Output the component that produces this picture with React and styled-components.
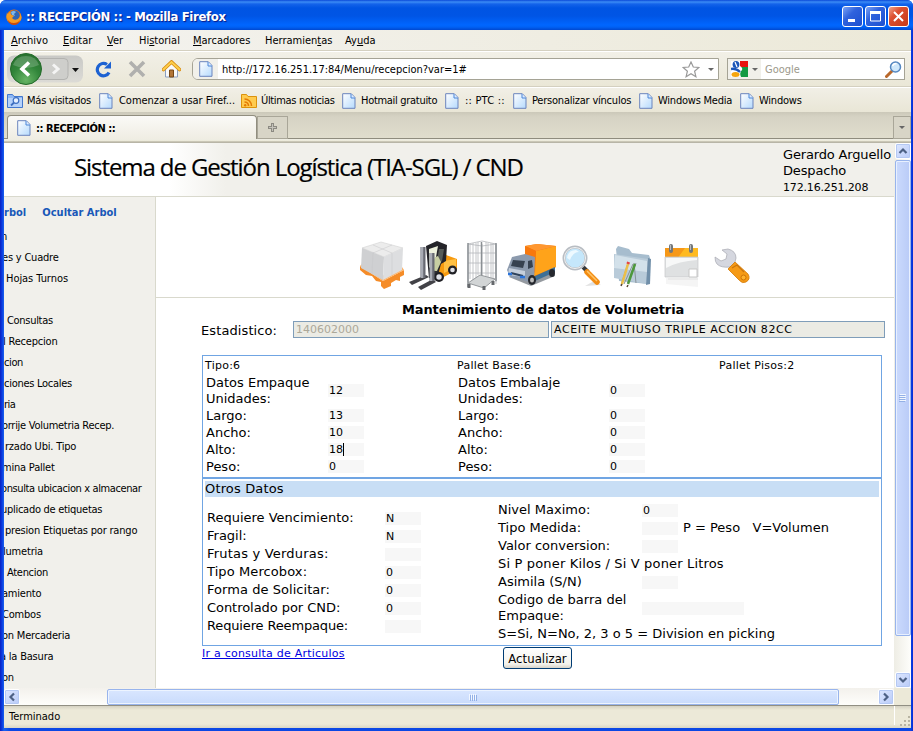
import React from "react";
import styled, { createGlobalStyle } from "styled-components";

const ui = '"DejaVu Sans Condensed", "DejaVu Sans", sans-serif';
const web = '"DejaVu Sans", Verdana, sans-serif';

const GlobalStyle = createGlobalStyle`
  * { box-sizing: border-box; }
  html, body { margin: 0; padding: 0; overflow: hidden; }
  body { font-family: ${ui}; font-stretch: condensed; font-size: 11px; color: #000; }
  svg { display: block; flex: none; }
`;

/* ---------- window frame ---------- */
const Window = styled.div`
  width: 913px;
  height: 731px;
  display: flex;
  flex-direction: column;
  overflow: hidden;
  border-radius: 6px 6px 0 0;
  background: linear-gradient(90deg, #0a1fc0 0, #0a3be0 2px, #1a63ee 4px, #0b47e4 10px, #0b47e4 911px, #0831d9 912px);
`;
const TitleBar = styled.div`
  height: 30px;
  flex: none;
  display: flex;
  align-items: center;
  padding: 3px 4px 0 6px;
  background: linear-gradient(#0a49d8 0, #3b8cf5 2px, #1463ea 4px, #0054e3 8px, #0055e5 16px, #0066ff 25px, #0061f5 27px, #0048d0 30px);
`;
const Title = styled.h1`
  flex: 1;
  margin: 0 0 0 4px;
  font: bold 13px ${ui};
  font-stretch: condensed;
  letter-spacing: -0.36px;
  color: #fff;
  text-shadow: 1px 1px 1px #0a1883;
  white-space: nowrap;
`;
const WinButton = styled.button`
  width: 21px;
  height: 21px;
  margin-left: 2px;
  padding: 0;
  display: grid;
  place-items: center;
  border: 1px solid #fff;
  border-radius: 3px;
  background: ${(p) =>
    p.$close
      ? "linear-gradient(135deg, #f0a58c, #dd5030 35%, #c63a18)"
      : "linear-gradient(135deg, #7ba3f5, #2f62dd 40%, #1c4fd0)"};
`;
const Frame = styled.div`
  flex: 1;
  min-height: 0;
  margin: 0 2px 4px 4px;
  display: flex;
  flex-direction: column;
  background: #ece9d8;
`;
const Spacer = styled.span`
  width: ${(p) => p.$w}px;
  flex: none;
`;

/* ---------- menus and toolbars ---------- */
const MenuBar = styled.div`
  height: 21px;
  flex: none;
  display: flex;
  align-items: center;
  padding-left: 7px;
  background: linear-gradient(90deg, #f4f3f0, #efede2 60%, #ece9d8);
  border-bottom: 1px solid #d4d0c0;
`;
const MenuItem = styled.span`
  width: ${(p) => p.$w}px;
  white-space: nowrap;
`;
const NavBar = styled.div`
  height: 36px;
  flex: none;
  display: flex;
  align-items: center;
  padding: 0 6px 0 3px;
  border-top: 1px solid #fff;
  border-bottom: 1px solid #d4d0c0;
  background: linear-gradient(#f2f0e7, #eae7d7);
`;
const IconSlot = styled.span`
  width: 34px;
  display: grid;
  place-items: center;
`;
const Field = styled.div`
  height: 22px;
  width: ${(p) => p.$w}px;
  flex: none;
  display: flex;
  align-items: center;
  border: 1px solid #a5a395;
  border-radius: ${(p) => (p.$round ? "6px 0 0 6px" : "0")};
  background: #fff;
  overflow: hidden;
`;
const FieldIcon = styled.span`
  width: ${(p) => p.$w}px;
  height: 100%;
  flex: none;
  display: flex;
  align-items: center;
  justify-content: center;
  gap: 4px;
  background: #f1f0ea;
`;
const FieldText = styled.span`
  flex: 1;
  padding-left: 4px;
  white-space: nowrap;
  color: ${(p) => (p.$dim ? "#9c998b" : "#000")};
`;
const BookmarkBar = styled.div`
  height: 25px;
  flex: none;
  display: flex;
  align-items: center;
  padding: 1px 0 0 3px;
  border-top: 1px solid #fff;
  background: linear-gradient(#f1efe6, #e9e6d6);
`;
const Bookmark = styled.span`
  width: ${(p) => p.$w}px;
  flex: none;
  display: flex;
  align-items: center;
  gap: ${(p) => p.$gap}px;
  white-space: nowrap;
  letter-spacing: ${(p) => p.$ls ?? -0.22}px;
`;
const TabStrip = styled.div`
  height: 31px;
  flex: none;
  display: flex;
  align-items: flex-start;
  padding: 3px 0 0 3px;
  background: linear-gradient(#cbc8b9 0, #d6d3c4 5px, #e0ddcd 26px, #8f8c7e 26px, #8f8c7e 27px, #efeee6 27px, #ece9d8 29px, #a8a595 30px, #c8c5b8 31px);
`;
const Tab = styled.div`
  width: 250px;
  height: 24px;
  display: flex;
  align-items: center;
  gap: 5px;
  padding: 1px 0 0 9px;
  border: 1px solid #918e7f;
  border-bottom: 0;
  border-radius: 4px 4px 0 0;
  background: linear-gradient(#fbfaf7, #efede3);
  font-weight: bold;
  letter-spacing: -0.45px;
`;
const NewTab = styled.div`
  width: 31px;
  height: 23px;
  margin-top: 1px;
  display: grid;
  place-items: center;
  border: 1px solid #a9a698;
  background: #d8d5c7;
`;
const AllTabs = styled(NewTab)`
  width: 18px;
  margin-left: auto;
`;

/* ---------- viewport ---------- */
const Viewport = styled.div`
  height: 545px;
  flex: none;
  display: flex;
`;
const Page = styled.div`
  width: 890px;
  display: grid;
  grid-template: 54px 491px / 152px 738px;
  background: #fff;
  overflow: hidden;
`;
const PageHeader = styled.header`
  grid-column: 1 / 3;
  display: flex;
  justify-content: space-between;
  border-bottom: 1px solid #d9d9cd;
  background: linear-gradient(90deg, #fff 165px, #f1f0eb 222px);
`;
const SystemName = styled.h2`
  margin: 7px 0 0 70px;
  font: 24px/34px "Open Sans", "Noto Sans", sans-serif;
  font-stretch: normal;
  letter-spacing: -1.08px;
  -webkit-text-stroke: 0.2px #000;
  white-space: nowrap;
`;
const UserInfo = styled.div`
  width: 111px;
  padding-top: 4px;
  font: 13px/16px ${web};
  letter-spacing: -0.16px;
  white-space: nowrap;
`;
const Address = styled.small`
  display: block;
  font-size: 11px;
  line-height: 17px;
`;
const Sidebar = styled.nav`
  border-right: 1px solid #d9d9cd;
  background: #f1f0eb;
  overflow: hidden;
`;
const TreeActions = styled.div`
  height: 28px;
  margin-top: 1px;
  display: flex;
  gap: 16px;
  font: bold 11px/29px ${ui};
  font-stretch: condensed;
  color: #1858b8;
  letter-spacing: 0.02px;
  white-space: nowrap;
`;
const TreeItem = styled.div`
  height: 21px;
  line-height: 21px;
  margin-left: ${(p) => p.$x}px;
  letter-spacing: ${(p) => p.$ls || -0.2}px;
  white-space: pre;
`;
const Main = styled.main`
  font-family: ${web};
  font-stretch: normal;
`;
const IconRow = styled.div`
  height: 101px;
  padding: 43px 0 0 201px;
  display: flex;
  border-bottom: 1px solid #d9d9cd;
`;
const Tool = styled.span`
  width: 50px;
  height: 50px;
`;
const Content = styled.div`
  padding: 3px 0 0 45px;
`;
const Heading = styled.h3`
  margin: 0 0 2px 201px;
  font: bold 13px/18px ${web};
  letter-spacing: -0.12px;
  white-space: nowrap;
`;
const StatRow = styled.div`
  display: flex;
  align-items: center;
  height: 17px;
  font-size: 13px;
`;
const StatLabel = styled.label`
  width: 92px;
  padding-top: 2px;
  letter-spacing: 0.1px;
`;
const StatInput = styled.div`
  width: ${(p) => p.$w}px;
  height: 17px;
  margin-right: 2px;
  padding-left: 2px;
  border: 1px solid #7f9db9;
  background: #ebebe4;
  font-size: 11px;
  line-height: 16px;
  letter-spacing: ${(p) => (p.$dim ? 0 : 0.6)}px;
  color: ${(p) => (p.$dim ? "#aca899" : "#000")};
  white-space: nowrap;
`;
const Panel = styled.section`
  width: 680px;
  margin: 0 0 0 1px;
  border: 1px solid #70a5e3;
  font-size: 13px;
`;
const MeasurePanel = styled(Panel)`
  height: 123px;
  margin-top: 17px;
  padding: 1px 2px 0;
`;
const OtherPanel = styled(Panel)`
  height: 168px;
  padding: 2px;
`;
const Summary = styled.div`
  display: grid;
  grid-template-columns: 252px 262px auto;
  height: 17px;
  line-height: 17px;
  font-size: 11px;
  letter-spacing: 0.25px;
`;
const Columns = styled.div`
  display: grid;
  grid-template-columns: ${(p) => p.$cols};
  padding-left: ${(p) => p.$pad}px;
`;
const Row = styled.div`
  display: grid;
  grid-template-columns: ${(p) => p.$label}px auto 1fr;
  align-items: center;
  height: ${(p) => p.$h}px;
  line-height: 16px;
  letter-spacing: ${(p) => p.$ls || 0}px;
  white-space: nowrap;
`;
const Box = styled.div`
  width: ${(p) => p.$w || 36}px;
  height: 13px;
  padding-left: 1px;
  background: #f7f7f7;
  font-size: 11px;
  line-height: 14px;
  letter-spacing: 0;
`;
const Caret = styled.span`
  display: inline-block;
  width: 1px;
  height: 13px;
  vertical-align: top;
  background: #000;
`;
const Note = styled.span`
  padding-left: 5px;
  white-space: pre;
`;
const SectionTitle = styled.div`
  height: 16px;
  line-height: 16px;
  letter-spacing: 0.15px;
  background: #c8def5;
`;
const RightCol = styled.div`
  padding-top: 4px;
`;
const LeftCol = styled.div`
  padding-top: 12px;
`;
const Footer = styled.div`
  display: flex;
  padding: 1px 0 0 1px;
`;
const Link = styled.a`
  width: 301px;
  font-size: 11px;
  line-height: 13px;
  letter-spacing: 0.23px;
  color: #0000e0;
  text-decoration: underline;
`;
const SubmitButton = styled.button`
  width: 69px;
  height: 22px;
  padding: 0;
  border: 1px solid #003c74;
  border-radius: 3px;
  background: linear-gradient(#fff, #f3f2ec 80%, #d8d3c8);
  font: 13px ${ui};
  font-stretch: condensed;
  letter-spacing: 0.05px;
`;

/* ---------- scroll bars ---------- */
const VScroll = styled.div`
  width: 17px;
  display: flex;
  flex-direction: column;
  padding-left: 1px;
  background: linear-gradient(90deg, #eeede5, #fefefb);
`;
const HScroll = styled.div`
  height: 17px;
  flex: none;
  display: flex;
`;
const HTrack = styled.div`
  width: 890px;
  display: flex;
  padding-top: 1px;
  background: linear-gradient(#f3f1ec, #fefefb);
`;
const ScrollButton = styled.div`
  width: 16px;
  height: 16px;
  flex: none;
  display: grid;
  place-items: center;
  border: 1px solid #fff;
  border-radius: 2px;
  background: linear-gradient(135deg, #dde7ff, #b9cbf8);
  box-shadow: inset 0 0 0 1px #b4c8f3;
`;
const VThumb = styled.div`
  height: 476px;
  margin: 1px 0 36px;
  display: grid;
  place-items: center;
  border: 1px solid #98b4ec;
  border-radius: 2px;
  background: linear-gradient(90deg, #cbdafd, #b9cbf7);
  box-shadow: inset 0 0 0 1px #e8f0ff;
`;
const HThumb = styled.div`
  width: 732px;
  height: 16px;
  margin: 0 39px 0 87px;
  display: grid;
  place-items: center;
  border: 1px solid #98b4ec;
  border-radius: 2px;
  background: linear-gradient(#d9e6ff, #c9dbfc);
  box-shadow: inset 0 0 0 1px #edf4ff;
`;
const StatusBar = styled.div`
  flex: 1;
  display: flex;
  align-items: center;
  justify-content: space-between;
  padding: 0 0 2px 5px;
  border-top: 1px solid #918f83;
  background: linear-gradient(#d5d2c3, #ece9d8 4px, #ece9d8 18px, #d8d5c5);
`;

/* ---------- small icons ---------- */
const DocIcon = () => (
  <svg width="14" height="16" viewBox="0 0 14 16">
    <defs><linearGradient id="doc" x1="0" y1="0" x2="1" y2="1"><stop offset="0" stopColor="#fff" /><stop offset="1" stopColor="#b5dafd" /></linearGradient></defs>
    <path d="M.7.7h8.6l3.7 3.8v10.800H.7z" fill="url(#doc)" stroke="#6b84bd" />
    <path d="M9 1v4h4" fill="#dcebff" stroke="#4c87d8" />
  </svg>
);
const Arrow = ({ color = "#666" }) => (
  <svg width="6" height="3"><path d="M0 0h6L3 3z" fill={color} /></svg>
);
const FirefoxIcon = () => (
  <svg width="16" height="16" viewBox="0 0 16 16">
    <circle cx="8" cy="8" r="7.500" fill="#e87511" />
    <circle cx="8.500" cy="6.500" r="5.200" fill="#2f65b5" />
    <path d="M5 3q3-2 5 0l-2 2 1 2-3-1z" fill="#7fb9ec" />
    <path d="M1 3q0 2 1 2 1-2 3-2-1 2 1 3l2 1-2 2q2 3 6 1 3-2 2-6 3 5 0 8-3 4-8 3Q0 13 .4 7z" fill="#f69b22" />
    <path d="M1 8q1 6 7 6 4 0 6-3-1 5-6 5-6 0-7-8" fill="#c94a0e" />
  </svg>
);
const BackForward = () => (
  <svg width="77" height="32" viewBox="0 0 77 32">
    <defs>
      <radialGradient id="back" cx=".5" cy=".85" r=".85"><stop offset="0" stopColor="#68b565" /><stop offset=".55" stopColor="#31853a" /><stop offset="1" stopColor="#28702e" /></radialGradient>
      <linearGradient id="pill" x2="0" y2="1"><stop offset="0" stopColor="#c9c9c6" /><stop offset="1" stopColor="#dcdbd6" /></linearGradient>
    </defs>
    <rect x="0" y="2.500" width="76" height="27" rx="7" fill="url(#pill)" />
    <path d="M30 5.500h27q4 0 4 4v13q0 4-4 4H30z" fill="#cececb" stroke="#b3b3b0" />
    <path d="m46 11.500 5 4.500-5 4.500" fill="none" stroke="#f4f4f4" strokeWidth="3" />
    <circle cx="19" cy="16" r="15.500" fill="url(#back)" stroke="#246b2a" />
    <path d="M6 12q3-9 13-9t13 9q-13 6-26 0" fill="#fff" opacity=".2" />
    <path d="m22 9.500-7 6.500 7 6.500" fill="none" stroke="#fff" strokeWidth="3.600" />
    <path d="M65 15h7l-3.500 4z" fill="#111" />
  </svg>
);
const ReloadIcon = () => (
  <svg width="17" height="17" viewBox="0 0 17 17">
    <path d="M14 11.500A6.200 6.200 0 1 1 12 3.500" fill="none" stroke="#1d62d2" strokeWidth="3.200" />
    <path d="M16 .5v7H9z" fill="#1d62d2" />
  </svg>
);
const StopIcon = () => (
  <svg width="18" height="18"><path d="m2 2 14 14M16 2 2 16" stroke="#b0b0ae" strokeWidth="3.600" /></svg>
);
const HomeIcon = () => (
  <svg width="19" height="18" viewBox="0 0 19 18">
    <path d="M3.500 9v8h12V9l-6-6z" fill="#fafafa" stroke="#8b9fc0" />
    <path d="M1.500 9.500 9.500 2l8 7.500" fill="none" stroke="#d78b12" strokeWidth="3.600" strokeLinecap="round" />
    <path d="M1.500 9.500 9.500 2l8 7.500" fill="none" stroke="#fdce4b" strokeWidth="2" strokeLinecap="round" />
    <path d="M7.500 10h4v7h-4z" fill="#b27638" stroke="#754716" />
  </svg>
);
const StarIcon = () => (
  <svg width="18" height="17" viewBox="0 0 18 17">
    <path d="m9 1 2.300 5 5.500.500-4.200 3.700 1.300 5.500L9 12.800l-4.900 2.900 1.300-5.500L1.200 6.500l5.500-.5z" fill="#fff" stroke="#999" strokeWidth="1.200" />
  </svg>
);
const GoogleIcon = () => (
  <svg width="17" height="16" viewBox="0 0 17 16">
    <path d="M9 0h8v6H9z" fill="#e8120c" /><path d="M7 6h10v10H7z" fill="#139a43" />
    <path d="M0 0h9v5q3 2 2 4-3 3-1 7H0z" fill="#fff" />
    <ellipse cx="5" cy="3.500" rx="3.400" ry="3.500" fill="#1b56b8" />
    <path d="M4 1 6 6" stroke="#fff" strokeWidth="1.200" />
    <path d="M0 8q5-1 9 3" fill="none" stroke="#1b56b8" strokeWidth="2.400" />
    <ellipse cx="4.500" cy="13.400" rx="4" ry="2.500" fill="#f5a50c" />
  </svg>
);
const SearchIcon = () => (
  <svg width="17" height="17" viewBox="0 0 17 17">
    <path d="m7 10-5.500 5.500" stroke="#b9682b" strokeWidth="3" strokeLinecap="round" />
    <circle cx="10.500" cy="6" r="5" fill="#cfe8fb" stroke="#5587c0" strokeWidth="1.500" />
    <path d="M7.500 5q1-2.500 4-2.500" fill="none" stroke="#fff" strokeWidth="1.500" />
  </svg>
);
const FolderSearch = () => (
  <svg width="16" height="14" viewBox="0 0 16 14">
    <path d="M.5.500h5l1.500 2h8.500v11H.5z" fill="#8fb8f4" stroke="#4277cd" />
    <path d="M1 4h14v9H1z" fill="#b5d2fa" />
    <circle cx="9" cy="6.500" r="2.800" fill="#e6f1ff" stroke="#3d6fc0" strokeWidth="1.200" />
    <path d="m7 8.500-3 3" stroke="#3d6fc0" strokeWidth="1.800" />
  </svg>
);
const RssIcon = () => (
  <svg width="16" height="14" viewBox="0 0 16 14">
    <path d="M.5.500h5l1.500 2h8.500v11H.5z" fill="#ffcb4e" stroke="#dc930c" />
    <path d="M3.500 5a7 7 0 0 1 7 7M3.500 8a4 4 0 0 1 4 4" fill="none" stroke="#e47b05" strokeWidth="1.600" />
    <circle cx="4.200" cy="11.300" r="1.200" fill="#e47b05" />
  </svg>
);
const Chevron = ({ turn = 0 }) => (
  <svg width="10" height="10" viewBox="0 0 10 10">
    <path d="M1.500 7 5 3.500 8.500 7" fill="none" stroke="#4d6185" strokeWidth="2.200" transform={`rotate(${turn} 5 5)`} />
  </svg>
);
const Grip = ({ turn }) => (
  <svg width="8" height="8" viewBox="0 0 8 8">
    <g transform={turn ? "rotate(90 4 4)" : undefined}>
      <path d="M.5 1v6M2.500 1v6M4.500 1v6M6.500 1v6" stroke="#f2f7ff" />
      <path d="M1.500 2v6M3.500 2v6M5.500 2v6M7.500 2v6" stroke="#93b0e6" />
    </g>
  </svg>
);
const ResizeGrip = () => (
  <svg width="17" height="20" viewBox="0 0 17 20">
    <path d="M.5 0v19" stroke="#fff" />
    <path d="M14 10h2v2h-2zM10 14h2v2h-2zM14 14h2v2h-2zM6 18h2v2H6zM10 18h2v2h-2zM14 18h2v2h-2z" fill="#b8b4a2" />
  </svg>
);

/* ---------- application icons ---------- */
const Art = ({ children, x = 0, y = 0 }) => (
  <svg width="50" height="52" viewBox={`${-x} ${-y} 50 52`}>{children}</svg>
);
const PalletArt = () => (
  <Art y={-3}>
    <path d="m3 29 23 15 21-11v5l-4 2v4l-4-1-5 3v3l-7 3-3-3v-4l-5-1-4-5-6-1-6-5z" fill="#f58c28" />
    <path d="m3 29 23 15 21-11-2-3-20 9L5 27z" fill="#ffb265" />
    <path d="m5 11 19-6 22 6-19 9z" fill="#ececec" stroke="#d2d2d2" strokeWidth=".6" />
    <path d="m5 11 22 9-1 23L4 31z" fill="#cfd0d2" />
    <path d="m27 20 19-9-1 22-19 10z" fill="#dddee0" />
    <path d="m16 15-1 22M16 8l19 8v22M35 8l-19 8" stroke="#c6c7c9" strokeWidth=".5" fill="none" />
  </Art>
);
const ForkliftArt = () => (
  <Art y={-1}>
    <path d="M30 20l9-4 11 4v11l-17 9-8-3z" fill="#f79a0f" />
    <path d="m37 22 12-2v8l-12 6z" fill="#ffc043" />
    <path d="M19 7 30 2l10 4-1 16-5 3-4 15-8-1z" fill="#242429" />
    <path d="m22 10 9-3-2 11-4 8-3 3z" fill="#edf1dd" />
    <path d="M32 10h5l-2 12-6 6z" fill="#565b58" />
    <path d="M26 23q1-5 5-6l3 6-4 9h-5z" fill="#c7cea2" />
    <path d="M24 31l9 2 1 7-11 1z" fill="#303035" />
    <circle cx="32" cy="38" r="5" fill="#202025" /><circle cx="32" cy="38" r="2.700" fill="#dfe1e8" />
    <circle cx="45.500" cy="31" r="4.500" fill="#202025" /><circle cx="45.500" cy="31" r="2.300" fill="#dfe1e8" />
    <path d="m2 43 17-7 3 2-17 8zM11 48l15-8 3 3-15 8z" fill="#424247" />
    <path d="M16 8v31M25 14v28" stroke="#676972" strokeWidth="5" /><path d="M15 8v31M24 14v28" stroke="#a8abb4" strokeWidth="2.500" />
  </Art>
);
const CageArt = () => (
  <Art>
    <path d="M11 5v37M16 3v37M21 2v33M25 4v38M29 2v34M34 3v38M39 4v38M11 4l14-3 14 3v40M11 4l14 2 14-2M11 13h28M11 23h28M11 33h28M13 4v35M36 3v36M31 3v35M19 3v36" fill="none" stroke="#b5b8bb" strokeWidth=".8" />
    <path d="M11 3v44M24.500 2v35M39 3v38" stroke="#8b9094" strokeWidth="1.500" />
    <path d="m11 43 12-8 15 4-11 9z" fill="#d2d5d6" stroke="#94989b" />
    <path d="M12 44v4M27 46v4M36 41v4" stroke="#65686c" strokeWidth="3" />
  </Art>
);
const TruckArt = () => (
  <Art x={-1} y={1}>
    <path d="m3 36 22 9 24-10-2-5-33-4z" fill="#4e5660" opacity=".6" />
    <path d="M19 5 31 3l19 2v21l-22 10z" fill="#f07c0c" />
    <path d="m30 10 20-5v21l-22 9z" fill="#ffa31a" />
    <path d="m19 5 12-2 19 2-20 5z" fill="#ff9730" /><path d="m19 5 11 5-1 22-10-14z" fill="#f7780d" />
    <path d="m6 16 13-3 10 3-1 26-24-6-3-7z" fill="#8c9aad" />
    <path d="m7 19 12 1-2 7-12-2z" fill="#36414f" /><path d="m22 20 4-1 1 7-5 2z" fill="#36414f" />
    <path d="m3 27 16 3v6L2 34z" fill="#c5cfdc" /><path d="m5 32 12 3" stroke="#30435c" strokeWidth="2" /><path d="M2 33h4m8 3h5" stroke="#2b74db" strokeWidth="2.500" />
    <path d="m29 35 20-9v5l-20 9z" fill="#3e6f96" />
    <ellipse cx="26" cy="39" rx="4" ry="5" fill="#25282e" /><ellipse cx="26" cy="39" rx="2" ry="2.500" fill="#bbb" />
    <ellipse cx="46" cy="32" rx="3" ry="4" fill="#25282e" />
  </Art>
);
const LensArt = () => (
  <Art x={1}>
    <path d="m27 46 16-1-7-4z" fill="#e2e2e2" />
    <path d="m25 27 5 5" stroke="#37393c" strokeWidth="4" /><path d="m29 32 10 10" stroke="#f28d13" strokeWidth="5.500" strokeLinecap="round" /><path d="m29 31 10 10" stroke="#ffc56a" strokeWidth="1.500" />
    <circle cx="17" cy="18" r="11" fill="#c5e7fb" stroke="#b8bdc3" strokeWidth="3" /><circle cx="17" cy="18" r="10.500" fill="none" stroke="#f1f1f1" />
    <path d="M9 18q1-8 9-8l3 2q-6 0-9 8z" fill="#edf9ff" />
  </Art>
);
const FolderArt = () => (
  <Art x={2} y={1}>
    <path d="m7 8 2-3 11 3 3 4 17 2 1 3-2 26-29-3z" fill="#a7bdce" />
    <path d="m5 13 34 5-1 25-33-6z" fill="#b9cbd9" /><path d="m6 14 32 6v11L5 27z" fill="#dce8ef" opacity=".75" />
    <path d="m39 17 3 1-1 25-4 1z" fill="#718fa9" />
    <path d="m19 22-7 22M24 23l-9 20M27 22l-8 20M25 22l2 20" stroke="#879398" strokeWidth="1" />
    <path d="m19 23-6 20" stroke="#ecbf49" strokeWidth="2.500" /><path d="m26 23-7 20" stroke="#4d983c" strokeWidth="2.500" />
    <path d="m19.500 21-.6 2" stroke="#e84440" strokeWidth="3" /><path d="m13 43-1 2m7-1-1 2" stroke="#594534" strokeWidth="1.500" />
  </Art>
);
const CalendarArt = () => (
  <Art x={2} y={2}>
    <path d="M7 36h32v9L7 42z" fill="#eeefef" opacity=".6" />
    <path d="M6 6h33v11H6z" fill="#f69818" /><path d="M26 6h13v11H18z" fill="#ffba20" />
    <path d="M6 15h33v20H6z" fill="#dfe1e2" stroke="#c5c7c8" strokeWidth=".7" /><path d="M7 26q13-7 31-8v-2H7z" fill="#f7f8f8" />
    <path d="M30 35v-8h8v8z" fill="#fff" stroke="#c7c7c7" />
    <path d="M12 4v5M32 4v5" stroke="#73777a" strokeWidth="4" strokeLinecap="round" /><path d="M11.500 3v5m20-5v5" stroke="#bbb" />
    <path d="M9 37h30" stroke="#e1e1e1" />
  </Art>
);
const WrenchArt = () => (
  <Art x={3}>
    <path d="m12 10 6-1q8 2 8 9l-1 4-5 5q-9 1-13-3-2-2-2-7l6 4 5-2 1-5z" fill="#d5d7df" stroke="#aeb0b8" strokeWidth=".8" />
    <path d="m25 22 13 12q3 5-2 8-4 2-7-2L18 29z" fill="#f59a16" stroke="#d37a08" strokeWidth=".8" />
    <path d="m22 28 5-3 7 7" fill="none" stroke="#c9750f" strokeWidth="1.200" /><circle cx="33.500" cy="37.500" r="2.500" fill="#ffb12c" stroke="#cd7508" />
  </Art>
);

/* ---------- data ---------- */
const menus = [
  ["", "A", "rchivo", 52], ["", "E", "ditar", 44], ["", "V", "er", 32], ["Hi", "s", "torial", 54],
  ["", "M", "arcadores", 72], ["Herramien", "t", "as", 80], ["Ay", "u", "da", 50],
];
const bookmarks = [
  ["Más visitados", FolderSearch, 92, 4], ["Comenzar a usar Firef...", DocIcon, 142, 6, -0.04],
  ["Últimas noticias", RssIcon, 101, 4, -0.34], ["Hotmail gratuito", DocIcon, 103, 5, -0.3],
  [":: PTC ::", DocIcon, 68, 6, 0.2], ["Personalizar vínculos", DocIcon, 126, 5],
  ["Windows Media", DocIcon, 101, 5], ["Windows", DocIcon, 80, 5],
];
const tree = [
  ["n", -3], ["es y Cuadre", -2], ["Hojas Turnos", 2, -0.05], ["", 0], ["Consultas", 3, -0.3], ["l Recepcion", -1],
  ["cion", 0, -0.4], ["ciones Locales", 0, -0.28], ["ria", 0, -0.5], ["orrije Volumetria Recep.", -2, -0.28], ["rzado Ubi. Tipo", 1],
  ["mina Pallet", -2], ["onsulta ubicacion x almacenar", -3, -0.38], ["uplicado de etiquetas", -3, -0.28],
  ["presion Etiquetas por rango", 1], ["lumetria", -1], ["Atencion", 3, -0.3], ["amiento", -2], ["Combos", -2],
  ["on Mercaderia", -2], ["a la Basura", -4], ["on", -2],
];
const packing = [["Largo:", "13"], ["Ancho:", "10"], ["Alto:", "18", true], ["Peso:", "0"]];
const wrapping = [["Largo:", "0"], ["Ancho:", "0"], ["Alto:", "0"], ["Peso:", "0"]];
const flags = [
  ["Requiere Vencimiento:", "N"], ["Fragil:", "N"], ["Frutas y Verduras:", "", 0.2], ["Tipo Mercobox:", "0", 0.1],
  ["Forma de Solicitar:", "0", 0.05], ["Controlado por CND:", "0", -0.05], ["Requiere Reempaque:", "", -0.15],
];
const art = [PalletArt, ForkliftArt, CageArt, TruckArt, LensArt, FolderArt, CalendarArt, WrenchArt];

const Measures = ({ title, first, rows, label }) => (
  <div>
    <Row $label={label} $h={33}>
      <span>{title}<br />Unidades:</span>
      <Box>{first}</Box>
    </Row>
    {rows.map(([name, value, caret]) => (
      <Row key={name} $label={label} $h={17}>
        <span>{name}</span>
        <Box>{value}{caret && <Caret />}</Box>
      </Row>
    ))}
  </div>
);

export default function App() {
  return (
    <Window>
      <GlobalStyle />
      <TitleBar>
        <FirefoxIcon />
        <Title>:: RECEPCIÓN :: - Mozilla Firefox</Title>
        <WinButton><svg width="15" height="15"><path d="M3 10h7v3H3z" fill="#fff" /></svg></WinButton>
        <WinButton><svg width="15" height="15"><path d="M2.500 3.500h10v8.500h-10z" fill="none" stroke="#fff" /><path d="M2 2h11v3H2z" fill="#fff" /></svg></WinButton>
        <WinButton $close><svg width="15" height="15"><path d="m3 3 9 9m0-9-9 9" stroke="#fff" strokeWidth="2" /></svg></WinButton>
      </TitleBar>
      <Frame>
        <MenuBar>
          {menus.map(([a, u, b, w]) => <MenuItem key={u + b} $w={w}>{a}<u>{u}</u>{b}</MenuItem>)}
        </MenuBar>
        <NavBar>
          <BackForward />
          <Spacer $w={2} />
          <IconSlot><ReloadIcon /></IconSlot>
          <IconSlot><StopIcon /></IconSlot>
          <IconSlot><HomeIcon /></IconSlot>
          <Spacer $w={4} />
          <Field $w={527} $round>
            <FieldIcon $w={25}><DocIcon /></FieldIcon>
            <FieldText>http://172.16.251.17:84/Menu/recepcion?var=1#</FieldText>
            <StarIcon />
            <Spacer $w={8} />
            <Arrow />
            <Spacer $w={4} />
          </Field>
          <Spacer $w={8} />
          <Field $w={178}>
            <FieldIcon $w={33}><GoogleIcon /><Arrow /></FieldIcon>
            <FieldText $dim>Google</FieldText>
            <SearchIcon />
            <Spacer $w={2} />
          </Field>
        </NavBar>
        <BookmarkBar>
          {bookmarks.map(([name, Icon, w, gap, ls]) => (
            <Bookmark key={name} $w={w} $gap={gap} $ls={ls}><Icon />{name}</Bookmark>
          ))}
        </BookmarkBar>
        <TabStrip>
          <Tab><DocIcon />:: RECEPCIÓN ::</Tab>
          <NewTab><svg width="9" height="9"><path d="M3 0h3v3h3v3H6v3H3V6H0V3h3z" fill="#8c8a82" /><path d="M4 1h1v3h3v1H5v3H4V5H1V4h3z" fill="#c5c3bb" /></svg></NewTab>
          <AllTabs><Arrow /></AllTabs>
        </TabStrip>
        <Viewport>
          <Page>
            <PageHeader>
              <SystemName>Sistema de Gestión Logística (TIA-SGL) / CND</SystemName>
              <UserInfo>Gerardo Arguello<br />Despacho<Address>172.16.251.208</Address></UserInfo>
            </PageHeader>
            <Sidebar>
              <TreeActions><span>rbol</span><span>Ocultar Arbol</span></TreeActions>
              {tree.map(([name, x, ls], i) => <TreeItem key={i} $x={x} $ls={ls}>{name}</TreeItem>)}
            </Sidebar>
            <Main>
              <IconRow>{art.map((Icon, i) => <Tool key={i}><Icon /></Tool>)}</IconRow>
              <Content>
                <Heading>Mantenimiento de datos de Volumetria</Heading>
                <StatRow>
                  <StatLabel>Estadistico:</StatLabel>
                  <StatInput $w={256} $dim>140602000</StatInput>
                  <StatInput $w={334}>ACEITE MULTIUSO TRIPLE ACCION 82CC</StatInput>
                </StatRow>
                <MeasurePanel>
                  <Summary><span>Tipo:6</span><span>Pallet Base:6</span><span>Pallet Pisos:2</span></Summary>
                  <Columns $cols="252px auto" $pad={1}>
                    <Measures title="Datos Empaque" first="12" rows={packing} label={122} />
                    <Measures title="Datos Embalaje" first="0" rows={wrapping} label={151} />
                  </Columns>
                </MeasurePanel>
                <OtherPanel>
                  <SectionTitle>Otros Datos</SectionTitle>
                  <Columns $cols="291px auto" $pad={2}>
                    <LeftCol>
                      {flags.map(([name, value, ls]) => (
                        <Row key={name} $label={178} $h={18} $ls={ls}><span>{name}</span><Box>{value}</Box></Row>
                      ))}
                    </LeftCol>
                    <RightCol>
                      <Row $label={144} $h={18}><span>Nivel Maximo:</span><Box>0</Box></Row>
                      <Row $label={144} $h={18}><span>Tipo Medida:</span><Box /><Note>{"P = Peso\u00a0\u00a0 V=Volumen"}</Note></Row>
                      <Row $label={144} $h={18}><span>Valor conversion:</span><Box /></Row>
                      <Row $label={144} $h={18} $ls={0.17}><span>Si P poner Kilos / Si V poner Litros</span></Row>
                      <Row $label={144} $h={18}><span>Asimila (S/N)</span><Box /></Row>
                      <Row $label={144} $h={34}><span>Codigo de barra del<br />Empaque:</span><Box $w={102} /></Row>
                      <Row $label={144} $h={18}><span>S=Si, N=No, 2, 3 o 5 = Division en picking</span></Row>
                    </RightCol>
                  </Columns>
                </OtherPanel>
                <Footer>
                  <Link>Ir a consulta de Articulos</Link>
                  <SubmitButton>Actualizar</SubmitButton>
                </Footer>
              </Content>
            </Main>
          </Page>
          <VScroll>
            <ScrollButton><Chevron /></ScrollButton>
            <VThumb><Grip turn /></VThumb>
            <ScrollButton><Chevron turn={180} /></ScrollButton>
          </VScroll>
        </Viewport>
        <HScroll>
          <HTrack>
            <ScrollButton><Chevron turn={-90} /></ScrollButton>
            <HThumb><Grip /></HThumb>
            <ScrollButton><Chevron turn={90} /></ScrollButton>
          </HTrack>
        </HScroll>
        <StatusBar>Terminado<ResizeGrip /></StatusBar>
      </Frame>
    </Window>
  );
}
